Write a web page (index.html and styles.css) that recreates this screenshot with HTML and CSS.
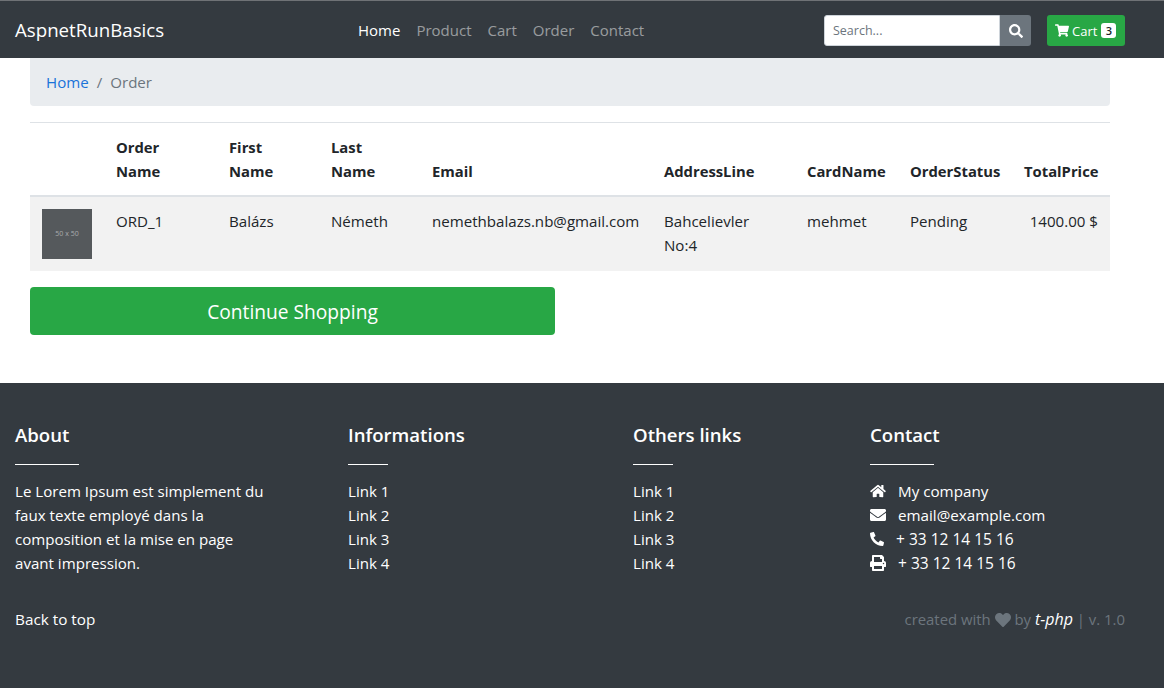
FILE: index.html
```html
<!DOCTYPE html>
<html lang="en">
<head>
    <meta charset="UTF-8">
    <meta name="viewport" content="width=device-width, initial-scale=1.0">
    <title>Order - AspnetRunBasics</title>
    <link rel="stylesheet" href="styles.css">
</head>
<body>
    <header class="navbar">
        <a class="brand" href="#">AspnetRunBasics</a>
        <nav class="nav-links">
            <a class="active" href="#">Home</a>
            <a href="#">Product</a>
            <a href="#">Cart</a>
            <a href="#">Order</a>
            <a href="#">Contact</a>
        </nav>
        <form class="search">
            <input type="text" placeholder="Search...">
            <button type="button" class="search-btn">
                <svg viewBox="0 0 512 512" width="14" height="14"><path fill="#fff" d="M505 442.700L405.300 343c-4.500-4.500-10.600-7-17-7H372c27.600-35.300 44-79.700 44-128C416 93.100 322.900 0 208 0S0 93.100 0 208s93.100 208 208 208c48.300 0 92.700-16.400 128-44v16.300c0 6.400 2.500 12.500 7 17l99.700 99.700c9.400 9.400 24.600 9.400 33.900 0l28.300-28.300c9.400-9.400 9.400-24.600.1-34zM208 336c-70.700 0-128-57.200-128-128 0-70.700 57.200-128 128-128 70.700 0 128 57.200 128 128 0 70.700-57.200 128-128 128z"/></svg>
            </button>
        </form>
        <a class="cart-btn" href="#">
            <svg viewBox="0 0 576 512" width="14" height="13"><path fill="#fff" d="M528 301.300l47.300-208C578.700 78.300 567.300 64 552 64H159.200l-9.200-44.800C147.800 8 137.900 0 126.500 0H24C10.700 0 0 10.700 0 24v16c0 13.300 10.700 24 24 24h69.900l70.200 343.400C147.300 417.100 136 435.200 136 456c0 30.900 25.100 56 56 56s56-25.100 56-56c0-15.700-6.400-29.800-16.800-40h209.600C430.400 426.200 424 440.300 424 456c0 30.900 25.100 56 56 56s56-25.100 56-56c0-22.200-12.900-41.300-31.600-50.400l5.500-24.300c3.400-15-8-29.300-23.400-29.300H218.100l-6.500-32h293c11.200 0 20.900-7.800 23.400-18.700z"/></svg>
            Cart <span class="badge">3</span>
        </a>
    </header>

    <main class="content">
        <ol class="breadcrumb">
            <li><a href="#">Home</a></li>
            <li class="sep">/</li>
            <li class="current">Order</li>
        </ol>

        <table class="order-table">
            <thead>
                <tr>
                    <th class="col-img"></th>
                    <th class="col-order">Order Name</th>
                    <th class="col-first">First Name</th>
                    <th class="col-last">Last Name</th>
                    <th class="col-email">Email</th>
                    <th class="col-addr">AddressLine</th>
                    <th class="col-card">CardName</th>
                    <th class="col-status">OrderStatus</th>
                    <th class="col-price">TotalPrice</th>
                </tr>
            </thead>
            <tbody>
                <tr>
                    <td><div class="thumb">50 x 50</div></td>
                    <td>ORD_1</td>
                    <td>Balázs</td>
                    <td>Németh</td>
                    <td>nemethbalazs.nb@gmail.com</td>
                    <td>Bahcelievler No:4</td>
                    <td>mehmet</td>
                    <td>Pending</td>
                    <td class="price">1400.00 $</td>
                </tr>
            </tbody>
        </table>

        <a class="continue-btn" href="#">Continue Shopping</a>
    </main>

    <footer class="footer">
        <div class="footer-cols">
            <section class="col-about">
                <h5>About</h5>
                <hr class="rule-wide">
                <p>Le Lorem Ipsum est simplement du faux texte employé dans la composition et la mise en page avant impression.</p>
            </section>
            <section class="col-info">
                <h5>Informations</h5>
                <hr class="rule-small">
                <ul>
                    <li><a href="#">Link 1</a></li>
                    <li><a href="#">Link 2</a></li>
                    <li><a href="#">Link 3</a></li>
                    <li><a href="#">Link 4</a></li>
                </ul>
            </section>
            <section class="col-others">
                <h5>Others links</h5>
                <hr class="rule-small">
                <ul>
                    <li><a href="#">Link 1</a></li>
                    <li><a href="#">Link 2</a></li>
                    <li><a href="#">Link 3</a></li>
                    <li><a href="#">Link 4</a></li>
                </ul>
            </section>
            <section class="col-contact">
                <h5>Contact</h5>
                <hr class="rule-wide">
                <ul>
                    <li>
                        <svg viewBox="0 0 576 512" width="16" height="14"><path fill="#fff" d="M280.400 148.300L96 300.100V464a16 16 0 0 0 16 16l112.100-.3a16 16 0 0 0 15.900-16V368a16 16 0 0 1 16-16h64a16 16 0 0 1 16 16v95.600a16 16 0 0 0 16 16.100L464 480a16 16 0 0 0 16-16V300L295.700 148.300a12.200 12.200 0 0 0-15.300 0zM571.600 251.500L488 182.600V44.100a12 12 0 0 0-12-12h-56a12 12 0 0 0-12 12v72.600L318.500 43a48 48 0 0 0-61 0L4.300 251.500a12 12 0 0 0-1.600 16.900l25.500 31A12 12 0 0 0 45.200 301l235.200-193.700a12.200 12.200 0 0 1 15.300 0L530.900 301a12 12 0 0 0 16.900-1.600l25.500-31a12 12 0 0 0-1.700-16.900z"/></svg>
                        <span class="gap-home">My company</span>
                    </li>
                    <li>
                        <svg viewBox="0 0 512 512" width="16" height="16"><path fill="#fff" d="M502.300 190.800c3.900-3.100 9.700-.2 9.700 4.700V400c0 26.500-21.500 48-48 48H48c-26.500 0-48-21.500-48-48V195.600c0-5 5.700-7.800 9.700-4.700 22.400 17.400 52.100 39.500 154.100 113.600 21.100 15.400 56.700 47.800 92.200 47.600 35.700.3 72-32.800 92.300-47.600 102-74.100 131.600-96.300 154-113.700zM256 320c23.200.4 56.600-29.200 73.400-41.400 132.700-96.300 142.800-104.700 173.400-128.700 5.800-4.500 9.200-11.500 9.200-18.900v-19c0-26.500-21.500-48-48-48H48C21.500 64 0 85.500 0 112v19c0 7.400 3.400 14.300 9.200 18.900 30.600 23.900 40.700 32.400 173.400 128.700 16.800 12.200 50.200 41.800 73.400 41.400z"/></svg>
                        <span class="gap-mail">email@example.com</span>
                    </li>
                    <li>
                        <svg viewBox="0 0 512 512" width="14" height="14"><path fill="#fff" d="M493.400 24.600l-104-24c-11.300-2.600-22.900 3.300-27.500 13.900l-48 112c-4.200 9.800-1.400 21.300 6.900 28l60.600 49.600c-36 76.700-98.900 140.500-177.200 177.200l-49.600-60.600c-6.800-8.300-18.200-11.100-28-6.900l-112 48C3.900 366.500-2 378.100.6 389.400l24 104C27.100 504.200 36.700 512 48 512c256.100 0 464-207.500 464-464 0-11.200-7.700-20.900-18.600-23.400z" transform="matrix(-1 0 0 1 512 0)"/></svg>
                        <span class="gap-phone">+ 33 12 14 15 16</span>
                    </li>
                    <li>
                        <svg viewBox="0 0 512 512" width="16" height="16"><path fill="#fff" d="M448 192V77.250c0-8.490-3.370-16.620-9.370-22.630L393.370 9.370c-6-6-14.140-9.370-22.630-9.370H96C78.330 0 64 14.330 64 32v160c-35.350 0-64 28.650-64 64v112c0 8.840 7.160 16 16 16h48v96c0 17.670 14.330 32 32 32h320c17.670 0 32-14.330 32-32v-96h48c8.840 0 16-7.160 16-16V256c0-35.350-28.650-64-64-64zm-64 256H128v-96h256v96zm0-224H128V64h192v48c0 8.840 7.160 16 16 16h48v96zm48 72c-13.250 0-24-10.750-24-24 0-13.260 10.750-24 24-24s24 10.740 24 24c0 13.250-10.750 24-24 24z"/></svg>
                        <span class="gap-print">+ 33 12 14 15 16</span>
                    </li>
                </ul>
            </section>
        </div>
        <div class="footer-bottom">
            <a href="#">Back to top</a>
            <span class="credit">created with
                <svg viewBox="0 0 512 512" width="16" height="16"><path fill="#6c757d" d="M462.300 62.600C407.500 15.900 326 24.300 275.700 76.200L256 96.500l-19.700-20.300C186.100 24.300 104.500 15.900 49.700 62.600c-62.800 53.600-66.100 149.800-9.900 207.900l193.500 199.800c12.500 12.900 32.800 12.900 45.300 0l193.500-199.800c56.300-58.100 53-154.300-9.800-207.900z"/></svg>
                by <em>t-php</em> | v. 1.0</span>
        </div>
    </footer>
</body>
</html>
```

FILE: styles.css
```css
* {
    box-sizing: border-box;
}

body {
    margin: 0;
    background-color: #fff;
    color: #212529;
    font-family: "Open Sans", "Noto Sans", Arial, sans-serif;
    font-size: 15.100px;
    line-height: 24px;
}

a {
    color: inherit;
    text-decoration: none;
}

.navbar {
    display: flex;
    align-items: center;
    height: 58px;
    padding: 0 39px 0 15px;
    background-color: #343a40;
    border-top: 1px solid #6f7276;
}

.brand {
    width: 343px;
    color: #fff;
    font-size: 18.700px;
}

.nav-links {
    display: flex;
    gap: 16px;
    width: 466px;
    font-size: 15px;
}

.nav-links a {
    color: rgba(255, 255, 255, 0.5);
}

.nav-links a.active {
    color: #fff;
}

.search {
    display: flex;
    height: 31px;
    margin: 2px 16px 0 0;
}

.search input {
    width: 176px;
    padding: 0 8px;
    border: 1px solid #ced4da;
    border-radius: 3px 0 0 3px;
    font-family: inherit;
    font-size: 12.500px;
    outline: none;
}

.search input::placeholder {
    color: #6c757d;
}

.search-btn {
    display: flex;
    align-items: center;
    justify-content: center;
    width: 31px;
    padding: 0;
    background-color: #6c757d;
    border: none;
    border-radius: 0 3px 3px 0;
}

.cart-btn {
    display: flex;
    align-items: center;
    gap: 3px;
    width: 78px;
    height: 31px;
    margin-top: 2px;
    padding: 0 8px;
    background-color: #28a745;
    border-radius: 3px;
    color: #fff;
    font-size: 13px;
}

.badge {
    display: inline-block;
    min-width: 15px;
    margin-left: 1px;
    background-color: #fff;
    border-radius: 3px;
    color: #212529;
    font-size: 11px;
    font-weight: 600;
    line-height: 15px;
    text-align: center;
}

.content {
    height: 325px;
    padding: 0 54px 0 30px;
}

.breadcrumb {
    display: flex;
    gap: 8px;
    height: 48px;
    margin: 0 0 16px;
    padding: 12px 16px;
    list-style: none;
    background-color: #e9ecef;
    border-radius: 0 0 4px 4px;
}

.breadcrumb a {
    color: #1a73d9;
}

.sep,
.current {
    color: #6c757d;
}

.order-table {
    width: 1080px;
    border-collapse: collapse;
    table-layout: fixed;
}

.order-table th,
.order-table td {
    padding: 12px;
    vertical-align: top;
    text-align: left;
}

.order-table th {
    vertical-align: bottom;
    border-top: 1px solid #dee2e6;
    border-bottom: 2px solid #dee2e6;
    font-size: 14.800px;
    font-weight: 700;
}

.order-table tbody tr {
    background-color: #f2f2f2;
}

.col-img { width: 74px; }
.col-order { width: 113px; }
.col-first { width: 102px; }
.col-last { width: 101px; }
.col-email { width: 232px; }
.col-addr { width: 143px; }
.col-card { width: 103px; }
.col-status { width: 114px; }
.col-price { width: 98px; }

.order-table .price {
    text-align: right;
    white-space: nowrap;
}

.thumb {
    display: flex;
    align-items: center;
    justify-content: center;
    width: 50px;
    height: 50px;
    background-color: #55595c;
    color: #a9abad;
    font-size: 7px;
}

.continue-btn {
    display: block;
    width: 525px;
    height: 48px;
    margin-top: 16px;
    background-color: #28a745;
    border-radius: 4px;
    color: #fff;
    font-size: 19.200px;
    line-height: 50px;
    text-align: center;
}

.footer {
    height: 305px;
    padding: 40px 39px 0 15px;
    background-color: #343a40;
    color: #fff;
}

.footer-cols {
    display: flex;
}

.footer h5 {
    margin: 0;
    font-size: 18.600px;
    font-weight: 600;
    line-height: 24px;
}

.footer hr {
    height: 1px;
    margin: 17px 0 14px;
    background-color: #fff;
    border: none;
}

.rule-wide {
    width: 64px;
}

.rule-small {
    width: 40px;
}

.footer p {
    margin: 0;
}

.footer ul {
    margin: 0;
    padding: 0;
    list-style: none;
}

.col-about {
    width: 333px;
}

.col-about p {
    width: 250px;
}

.col-info {
    width: 285px;
}

.col-others {
    width: 237px;
}

.col-contact li {
    display: flex;
    align-items: center;
    height: 24px;
    font-size: 15.200px;
}

.gap-home {
    margin-left: 12px;
}

.gap-mail {
    margin-left: 12px;
}

.gap-phone {
    margin-left: 12px;
    font-size: 15.500px;
}

.gap-print {
    margin-left: 12px;
    font-size: 15.500px;
}

.footer-bottom {
    display: flex;
    justify-content: space-between;
    margin-top: 32px;
    font-size: 15.300px;
}

.credit {
    color: #6c757d;
    font-size: 14.900px;
}

.credit svg {
    vertical-align: -3px;
}

.credit em {
    color: #fff;
    font-size: 16px;
}
```
